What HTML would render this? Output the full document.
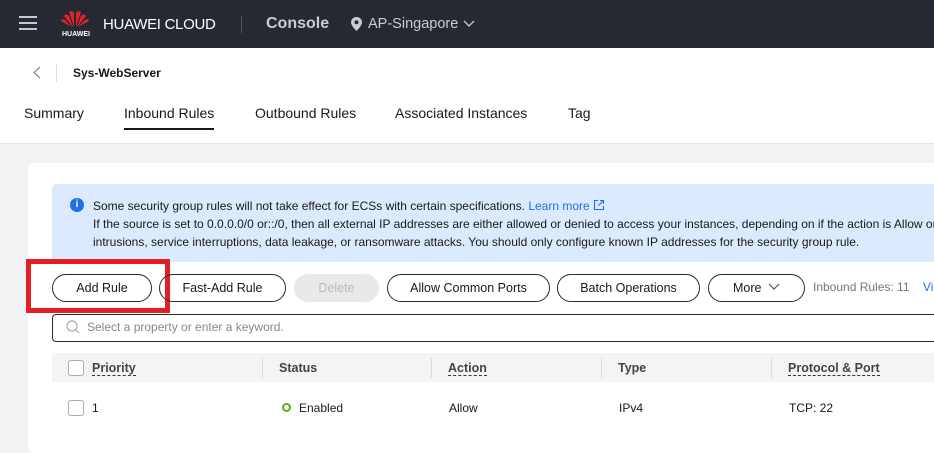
<!DOCTYPE html>
<html><head><meta charset="utf-8"><style>
*{box-sizing:border-box;margin:0;padding:0}
body{width:934px;height:431px;overflow:hidden;font-family:"Liberation Sans",Arial,sans-serif;background:#f1f2f4;position:relative;color:#191919}
.top{position:absolute;left:0;top:0;width:934px;height:48px;background:#252932}
.a{position:absolute;white-space:nowrap}
.white{position:absolute;left:0;top:48px;width:934px;height:96px;background:#fff;border-bottom:1px solid #e6e6e6}
.card{position:absolute;left:28px;top:163px;width:920px;height:290px;background:#fff;border-radius:6px}
.info{position:absolute;left:52px;top:184px;width:890px;height:78px;background:#dbeafe;border-radius:4px}
.btn{position:absolute;top:274px;height:28px;border:1px solid #2a2a2a;border-radius:14px;font-size:12.5px;text-align:center;line-height:26px;color:#191919}
.th{font-size:12.5px;font-weight:bold;color:#444}
.dash{border-bottom:1px dashed #333}
.cb{position:absolute;width:16px;height:16px;border:1px solid #aaa;border-radius:3px;background:#fff}
.sep{position:absolute;top:358px;width:1px;height:20px;background:#ddd}
</style></head><body>
<div class="top"></div>
<div class="a" style="left:19px;top:16px;width:18px;height:2px;background:#c8c9cc;box-shadow:0 6px 0 #c8c9cc,0 12px 0 #c8c9cc"></div>
<svg class="a" style="left:61px;top:10px" width="28" height="18" viewBox="0 0 28 18">
<g fill="#e3222a">
<path d="M13 17 L8 2 Q11 0 13 3Z"/><path d="M15 17 L20 2 Q17 0 15 3Z"/>
<path d="M12 17 L3 6 Q5 3 8 6Z"/><path d="M16 17 L25 6 Q23 3 20 6Z"/>
<path d="M11 17 L0 11 Q1 8 4 10Z"/><path d="M17 17 L28 11 Q27 8 24 10Z"/>
</g></svg>
<div class="a" style="left:62px;top:31px;font-size:7px;font-weight:bold;color:#fff">HUAWEI</div>
<div class="a" style="left:103px;top:16px;font-size:15px;color:#fff;letter-spacing:-0.3px">HUAWEI CLOUD</div>
<div class="a" style="left:241px;top:16px;width:1px;height:17px;background:#555"></div>
<div class="a" style="left:266px;top:15px;font-size:16px;font-weight:bold;color:#c9ccd2">Console</div>
<svg class="a" style="left:351px;top:17px" width="11" height="14" viewBox="0 0 11 14"><path d="M5.5 0C2.5 0 0 2.3 0 5.3 0 9 5.5 14 5.5 14S11 9 11 5.3C11 2.3 8.5 0 5.5 0Z" fill="#c9ccd2"/><circle cx="5.5" cy="5.3" r="2" fill="#252932"/></svg>
<div class="a" style="left:368px;top:16px;font-size:14.5px;color:#c9ccd2">AP-Singapore</div>
<svg class="a" style="left:463px;top:20px" width="12" height="8"><path d="M1 1L6 6L11 1" stroke="#c9ccd2" fill="none" stroke-width="1.3"/></svg>
<div class="white"></div>
<svg class="a" style="left:33px;top:66px" width="8" height="13"><path d="M7 1L1 6.5L7 12" stroke="#888" fill="none" stroke-width="1.2"/></svg>
<div class="a" style="left:56px;top:64px;width:1px;height:18px;background:#ddd"></div>
<div class="a" style="left:73px;top:66px;font-size:12px;font-weight:bold">Sys-WebServer</div>
<div class="a" style="left:24px;top:105px;font-size:14px">Summary</div>
<div class="a" style="left:124px;top:105px;font-size:14px">Inbound Rules</div>
<div class="a" style="left:124px;top:128px;width:90px;height:2px;background:#191919"></div>
<div class="a" style="left:255px;top:105px;font-size:14px">Outbound Rules</div>
<div class="a" style="left:395px;top:105px;font-size:14px">Associated Instances</div>
<div class="a" style="left:568px;top:105px;font-size:14px">Tag</div>
<div class="card"></div>
<div class="info"></div>
<div class="a" style="left:70px;top:198px;width:14px;height:14px;border-radius:7px;background:#2170e6;color:#fff;font-size:10px;font-weight:bold;text-align:center;line-height:14px">i</div>
<div class="a" style="left:93px;top:197px;font-size:12px;line-height:18px">Some security group rules will not take effect for ECSs with certain specifications. <span style="color:#2170e6">Learn more</span> <svg width="12" height="12" style="vertical-align:-1px"><path d="M5 1.5H1.5V10.5H10.5V7" stroke="#2170e6" fill="none" stroke-width="1.1"/><path d="M7 1.5H10.5V5M10.5 1.5L5.5 6.5" stroke="#2170e6" fill="none" stroke-width="1.1"/></svg><br>If the source is set to 0.0.0.0/0 or::/0, then all external IP addresses are either allowed or denied to access your instances, depending on if the action is Allow or<br>intrusions, service interruptions, data leakage, or ransomware attacks. You should only configure known IP addresses for the security group rule.</div>
<div class="btn" style="left:52px;width:100px">Add Rule</div>
<div class="a" style="left:26px;top:259px;width:144px;height:54px;border:5px solid #e31e24"></div>
<div class="btn" style="left:159px;width:127px">Fast-Add Rule</div>
<div class="btn" style="left:294px;width:85px;background:#e9e9e9;border-color:#e9e9e9;color:#bbb">Delete</div>
<div class="btn" style="left:387px;width:163px">Allow Common Ports</div>
<div class="btn" style="left:557px;width:143px">Batch Operations</div>
<div class="btn" style="left:708px;width:97px">More <svg width="12" height="8" style="margin-left:3px;vertical-align:1px"><path d="M1 1L6 6L11 1" stroke="#555" fill="none" stroke-width="1.2"/></svg></div>
<div class="a" style="left:813px;top:280px;font-size:12px;color:#777">Inbound Rules: 11 &nbsp;&nbsp;&nbsp;<span style="color:#2170e6">Vi</span></div>
<div class="a" style="left:52px;top:314px;width:900px;height:28px;border:1px solid #2a2a2a;border-radius:4px"></div>
<svg class="a" style="left:66px;top:320px" width="14" height="14"><circle cx="6" cy="6" r="5" stroke="#aaa" fill="none" stroke-width="1.2"/><path d="M10 10L13 13" stroke="#aaa" stroke-width="1.2"/></svg>
<div class="a" style="left:87px;top:320px;font-size:12px;color:#888">Select a property or enter a keyword.</div>
<div class="a" style="left:52px;top:353px;width:900px;height:29px;background:#f4f4f4"></div>
<div class="cb" style="left:68px;top:360px"></div>
<div class="a th" style="left:92px;top:361px"><span class="dash">Priority</span></div>
<div class="sep" style="left:262px"></div>
<div class="a th" style="left:279px;top:361px">Status</div>
<div class="sep" style="left:431px"></div>
<div class="a th" style="left:448px;top:361px"><span class="dash">Action</span></div>
<div class="sep" style="left:601px"></div>
<div class="a th" style="left:618px;top:361px">Type</div>
<div class="sep" style="left:771px"></div>
<div class="a th" style="left:788px;top:361px"><span class="dash">Protocol &amp; Port</span></div>
<div class="cb" style="left:68px;top:400px"></div>
<div class="a" style="left:92px;top:401px;font-size:12px">1</div>
<div class="a" style="left:282px;top:403px;width:9px;height:9px;border:2px solid #5aae1b;border-radius:5px"></div>
<div class="a" style="left:299px;top:401px;font-size:12px">Enabled</div>
<div class="a" style="left:449px;top:401px;font-size:12px">Allow</div>
<div class="a" style="left:619px;top:401px;font-size:12px">IPv4</div>
<div class="a" style="left:789px;top:401px;font-size:12px">TCP: 22</div>
</body></html>
